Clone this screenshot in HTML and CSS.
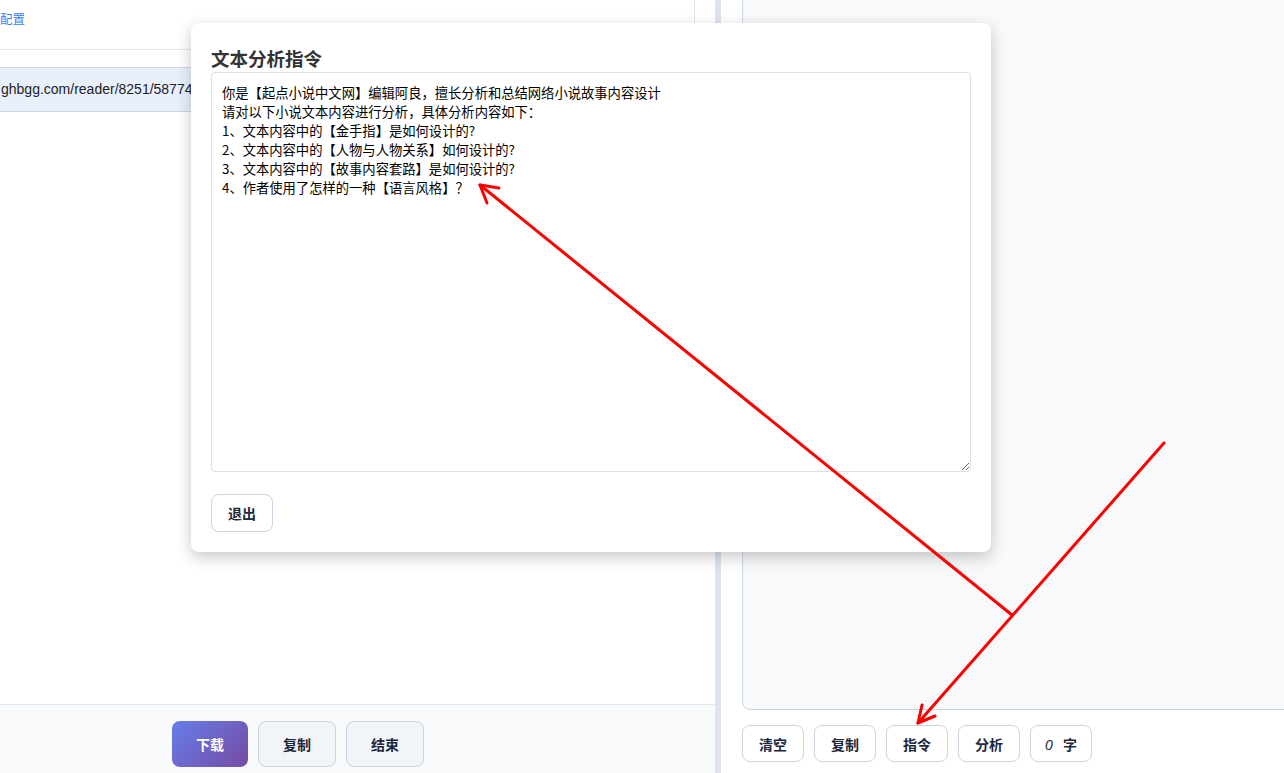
FILE: index.html
```html
<!DOCTYPE html>
<html lang="zh">
<head>
<meta charset="utf-8">
<title>文本分析指令</title>
<link rel="stylesheet" href="styles.css">
</head>
<body>
<div class="app">
  <section class="left">
    <header class="left-top">
      <a class="cfg-link">配置</a>
      <span class="top-rule"></span>
    </header>
    <div class="left-body">
      <div class="url-field">ghbgg.com/reader/8251/58774512.html</div>
    </div>
    <footer class="left-bottom">
      <button class="btn btn-primary">下载</button>
      <button class="btn btn-muted">复制</button>
      <button class="btn btn-muted">结束</button>
    </footer>
  </section>
  <div class="splitter"></div>
  <section class="right">
    <div class="output"></div>
    <div class="tool-row">
      <button class="tbtn">清空</button>
      <button class="tbtn">复制</button>
      <button class="tbtn">指令</button>
      <button class="tbtn">分析</button>
      <button class="tbtn"><i class="num">0</i>字</button>
    </div>
  </section>
</div>

<div class="modal">
  <h2 class="modal-title">文本分析指令</h2>
  <textarea class="prompt">你是【起点小说中文网】编辑阿良，擅长分析和总结网络小说故事内容设计
请对以下小说文本内容进行分析，具体分析内容如下：
1、文本内容中的【金手指】是如何设计的?
2、文本内容中的【人物与人物关系】如何设计的?
3、文本内容中的【故事内容套路】是如何设计的?
4、作者使用了怎样的一种【语言风格】？</textarea>
  <div class="modal-actions">
    <button class="btn-exit">退出</button>
  </div>
</div>

<svg class="annot" width="1284" height="773" viewBox="0 0 1284 773">
  <g fill="none" stroke="#ff0000" stroke-width="3" stroke-linecap="round" stroke-linejoin="round">
    <path d="M1164 443 L918 723"/>
    <path d="M922 705 L918 723 L935 716"/>
    <path d="M1012 615 L480 185"/>
    <path d="M499 188 L480 185 L487 203"/>
  </g>
</svg>
</body>
</html>
```

FILE: styles.css
```css
* { box-sizing: border-box; }
html, body {
  margin: 0;
  padding: 0;
  width: 1284px;
  height: 773px;
  overflow: hidden;
  background: #ffffff;
  font-family: "Noto Sans CJK SC", "Noto Sans", sans-serif;
}
.app {
  display: flex;
  width: 1284px;
  height: 773px;
}

/* left panel */
.left {
  width: 715px;
  display: flex;
  flex-direction: column;
  background: #ffffff;
  overflow: hidden;
}
.left-top {
  height: 50px;
  border-bottom: 1px solid #e5e7eb;
  display: flex;
  align-items: flex-start;
}
.cfg-link {
  margin-left: 0;
  margin-top: 10px;
  font-size: 12.5px;
  line-height: 18px;
  color: #3b82f6;
}
.top-rule {
  margin-left: auto;
  margin-right: 20px;
  width: 1px;
  height: 49px;
  background: #dfe3ea;
}
.left-body {
  flex: 1;
  padding-top: 17px;
}
.url-field {
  height: 45px;
  background: #e8f0fe;
  border-top: 1px solid #cdd5e0;
  border-bottom: 1px solid #cdd5e0;
  font-family: "Liberation Sans", Arial, sans-serif;
  font-size: 14px;
  line-height: 43px;
  color: #222;
  white-space: nowrap;
  overflow: hidden;
  padding-left: 1px;
}
.left-bottom {
  height: 69px;
  border-top: 1px solid #e2e8f0;
  background: #f8fafc;
  display: flex;
  align-items: flex-start;
  gap: 10px;
  padding-left: 172px;
  padding-top: 16px;
}
.btn {
  height: 46px;
  width: 78px;
  border-radius: 8px;
  font-family: "Noto Sans CJK SC", sans-serif;
  font-size: 14px;
  font-weight: 700;
  cursor: pointer;
}
.btn-primary {
  width: 76px;
  border: none;
  color: #ffffff;
  background: linear-gradient(135deg, #667eea 0%, #764ba2 100%);
}
.btn-muted {
  border: 1px solid #cbd5e1;
  background: #f1f5f9;
  color: #1e293b;
}

.splitter {
  width: 6px;
  background: #dde4ee;
}

/* right panel */
.right {
  flex: 1;
  display: flex;
  flex-direction: column;
  padding-left: 21px;
  overflow: hidden;
}
.output {
  flex: 1;
  margin-top: -12px;
  margin-right: -30px;
  background: #f8f9fb;
  border: 1px solid #cbd5e1;
  border-radius: 8px;
}
.tool-row {
  display: flex;
  gap: 10px;
  padding-top: 15px;
  padding-bottom: 11px;
}
.tbtn {
  width: 62px;
  height: 37px;
  border: 1px solid #cbd5e1;
  border-radius: 8px;
  background: #ffffff;
  color: #1e293b;
  font-family: "Noto Sans CJK SC", sans-serif;
  font-size: 14px;
  font-weight: 600;
  padding: 0;
}
.num {
  font-family: "Liberation Sans", Arial, sans-serif;
  font-weight: 400;
  font-style: italic;
  margin-right: 10px;
}

/* modal */
.modal {
  position: absolute;
  left: 191px;
  top: 23px;
  width: 800px;
  height: 529px;
  background: #ffffff;
  border-radius: 8px;
  box-shadow: 0 5px 16px rgba(0, 0, 0, 0.22);
  padding: 20px;
  display: flex;
  flex-direction: column;
}
.modal-title {
  margin: 2px 0 1px 0;
  font-size: 18.5px;
  line-height: 26px;
  font-weight: 700;
  color: #333333;
}
.prompt {
  display: block;
  width: 760px;
  height: 400px;
  border: 1px solid #dcdfe6;
  border-radius: 4px;
  padding: 10px 10px;
  font-family: "Noto Sans CJK SC", sans-serif;
  font-size: 13.3px;
  font-weight: 400;
  line-height: 19px;
  color: #000000;
  resize: vertical;
  outline: none;
}
.modal-actions {
  margin-top: 22px;
  display: flex;
}
.btn-exit {
  width: 62px;
  height: 38px;
  border: 1px solid #cbd5e1;
  border-radius: 8px;
  background: #ffffff;
  color: #1e293b;
  font-family: "Noto Sans CJK SC", sans-serif;
  font-size: 14px;
  font-weight: 600;
  padding: 0;
}

.annot {
  position: absolute;
  left: 0;
  top: 0;
  pointer-events: none;
}
```
